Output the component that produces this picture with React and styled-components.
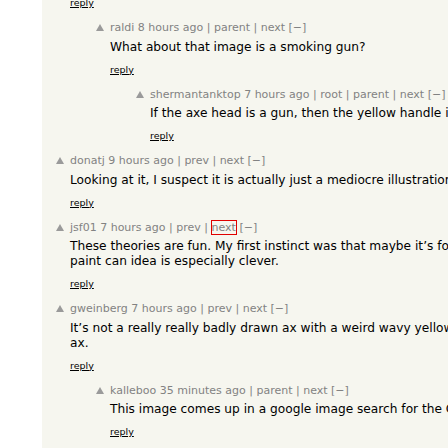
import React from "react";
import styled, { createGlobalStyle } from "styled-components";

const GlobalStyle = createGlobalStyle`
  html, body {
    margin: 0;
    padding: 0;
    background: #ffffff;
    overflow: hidden;
  }
  body {
    font-family: "DejaVu Sans", Verdana, sans-serif;
  }
`;

const Page = styled.div`
  margin-left: 42px;
  width: 1000px;
  background: #f6f6ef;
  min-height: 480px;
  margin-top: -14px;
`;

const Thread = styled.div`
  display: flex;
  flex-direction: column;
`;

const Comment = styled.div`
  display: flex;
  padding-left: ${(p) => 14 + p.$depth * 40}px;
  padding-top: 11px;
`;

const Vote = styled.div`
  width: 14px;
  flex: none;
  padding-top: 4px;
  line-height: 0;
`;

const Body = styled.div`
  display: flex;
  flex-direction: column;
  align-items: flex-start;
`;

const Head = styled.div`
  font-size: 11px;
  color: #828282;
  line-height: 15px;
  white-space: nowrap;
`;

const Link = styled.span`
  color: #828282;
  outline: ${(p) => (p.$focused ? "1px solid #e00000" : "none")};
  outline-offset: 0;
`;

const Text = styled.div`
  font-size: 12.2px;
  line-height: 15px;
  color: #000000;
  margin-top: 4.5px;
  white-space: nowrap;
`;

const Reply = styled.a`
  font-size: 9.5px;
  color: #000000;
  text-decoration: underline;
  margin-top: ${(p) => (p.$first ? 0 : 9)}px;
  line-height: 12px;
`;

const comments = [
  {
    depth: 1,
    user: "raldi",
    age: "8 hours ago",
    links: ["parent", "next"],
    text: ["What about that image is a smoking gun?"],
  },
  {
    depth: 2,
    user: "shermantanktop",
    age: "7 hours ago",
    links: ["root", "parent", "next"],
    text: [
      "If the axe head is a gun, then the yellow handle is a stream of paint.",
    ],
  },
  {
    depth: 0,
    user: "donatj",
    age: "9 hours ago",
    links: ["prev", "next"],
    text: [
      "Looking at it, I suspect it is actually just a mediocre illustration of an axe.",
    ],
  },
  {
    depth: 0,
    user: "jsf01",
    age: "7 hours ago",
    links: ["prev", "next"],
    focus: "next",
    text: [
      "These theories are fun. My first instinct was that maybe it\u2019s for a brand of",
      "paint can idea is especially clever.",
    ],
  },
  {
    depth: 0,
    user: "gweinberg",
    age: "7 hours ago",
    links: ["prev", "next"],
    text: [
      "It\u2019s not a really really badly drawn ax with a weird wavy yellow handle. It's an",
      "ax.",
    ],
  },
  {
    depth: 1,
    user: "kalleboo",
    age: "35 minutes ago",
    links: ["parent", "next"],
    text: ["This image comes up in a google image search for the Cold Steel axe."],
  },
];

function UpArrow() {
  return (
    <svg width="8" height="7" viewBox="0 0 8 7">
      <polygon points="4,0 8,7 0,7" fill="#9a9a9a" />
    </svg>
  );
}

function Header({ c }) {
  return (
    <Head>
      {c.user} {c.age}
      {c.links.map((l) => (
        <React.Fragment key={l}>
          {" | "}
          <Link $focused={c.focus === l}>{l}</Link>
        </React.Fragment>
      ))}{" "}
      [&minus;]
    </Head>
  );
}

export default function App() {
  return (
    <>
      <GlobalStyle />
      <Page>
        <Thread>
          <Comment $depth={0}>
            <Vote />
            <Body>
              <Reply href="#" $first>reply</Reply>
            </Body>
          </Comment>
          {comments.map((c) => (
            <Comment key={c.user} $depth={c.depth}>
              <Vote>
                <UpArrow />
              </Vote>
              <Body>
                <Header c={c} />
                <Text>
                  {c.text.map((t, i) => (
                    <div key={i}>{t}</div>
                  ))}
                </Text>
                <Reply href="#">reply</Reply>
              </Body>
            </Comment>
          ))}
        </Thread>
      </Page>
    </>
  );
}
